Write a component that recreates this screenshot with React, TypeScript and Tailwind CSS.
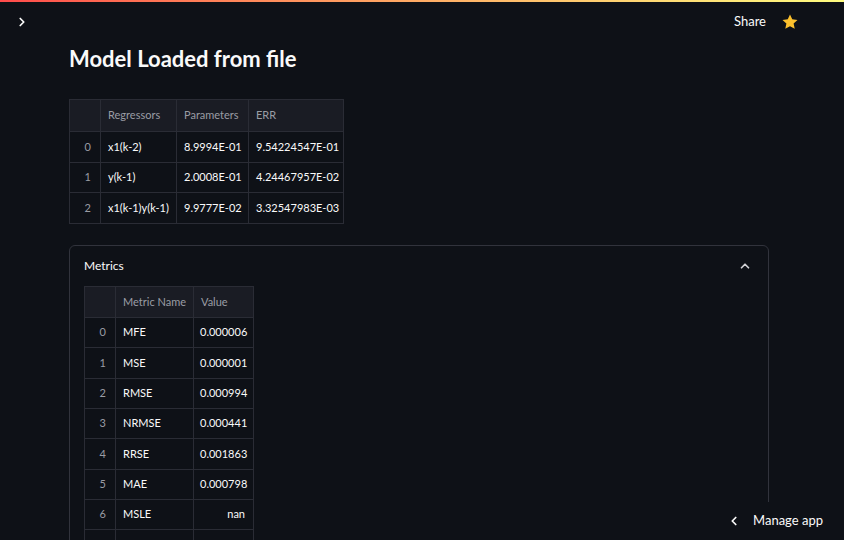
import { ChevronRight, ChevronUp, ChevronLeft } from "lucide-react";

const regressors = [
  { i: 0, name: "x1(k-2)", param: "8.9994E-01", err: "9.54224547E-01" },
  { i: 1, name: "y(k-1)", param: "2.0008E-01", err: "4.24467957E-02" },
  { i: 2, name: "x1(k-1)y(k-1)", param: "9.9777E-02", err: "3.32547983E-03" },
];

const metrics = [
  ["MFE", "0.000006"],
  ["MSE", "0.000001"],
  ["RMSE", "0.000994"],
  ["NRMSE", "0.000441"],
  ["RRSE", "0.001863"],
  ["MAE", "0.000798"],
  ["MSLE", "nan"],
  ["MAPE", "0.000697"],
];

const cell = "border border-[#2a2c35] whitespace-nowrap overflow-hidden";

export default function App() {
  return (
    <div
      className="relative w-full h-[540px] overflow-hidden bg-[#0e1117] text-[#fafafa]"
      style={{ fontFamily: "Lato, 'Liberation Sans', sans-serif" }}
    >
      {/* Decoration bar */}
      <div className="h-[2px] bg-gradient-to-r from-[#ff4b4b] to-[#fffd80]" />

      {/* Header */}
      <div className="flex items-center justify-between h-[40px] pl-[15px] pr-[45px]">
        <ChevronRight size={14} strokeWidth={3} className="text-[#fafafa]" />
        <div className="flex items-center gap-[15px]">
          <span className="text-[13px]">Share</span>
          <svg width="18" height="18" viewBox="0 0 24 24" aria-hidden="true">
            <path
              d="M12 2l3 6.4 7 .8-5.2 4.8 1.5 7L12 17.5 5.7 21l1.5-7L2 9.2l7-.8z"
              fill="#fbc02d"
            />
          </svg>
        </div>
      </div>

      <main className="pl-[69px] pr-[75px]">
        <h1 className="text-[22px] font-bold leading-[36px] -mt-[1px]">Model Loaded from file</h1>

        {/* Regressor table */}
        <table className="mt-[22px] table-fixed w-[274px] border-collapse text-[11px] border border-[#2a2c35]">
          <thead>
            <tr className="h-[32px] bg-[#1a1c24] text-[#9a9ca4]">
              <th className={`w-[31px] ${cell}`} />
              <th className={`w-[76px] px-[7px] text-left font-normal ${cell}`}>Regressors</th>
              <th className={`w-[72px] px-[7px] text-left font-normal ${cell}`}>Parameters</th>
              <th className={`w-[95px] px-[7px] text-left font-normal ${cell}`}>ERR</th>
            </tr>
          </thead>
          <tbody>
            {regressors.map((r) => (
              <tr key={r.i} className="h-[30.67px]">
                <td className={`pr-[9px] text-right text-[#9a9ca4] ${cell}`}>{r.i}</td>
                <td className={`px-[7px] ${cell}`}>{r.name}</td>
                <td className={`px-[7px] ${cell}`}>{r.param}</td>
                <td className={`px-[7px] ${cell}`}>{r.err}</td>
              </tr>
            ))}
          </tbody>
        </table>

        {/* Metrics expander */}
        <div className="mt-[21px] w-[700px] h-[400px] rounded-[6px] border border-[#31333c]">
          <div className="flex items-center justify-between h-[40px] pl-[14px] pr-[16px]">
            <span className="text-[12px]">Metrics</span>
            <ChevronUp size={14} strokeWidth={3} className="text-[#d0d0d4]" />
          </div>
          <table className="ml-[14px] table-fixed w-[169px] border-collapse text-[11px] border border-[#2a2c35]">
            <thead>
              <tr className="h-[31px] bg-[#1a1c24] text-[#9a9ca4]">
                <th className={`w-[31px] ${cell}`} />
                <th className={`w-[78px] px-[7px] text-left font-normal ${cell}`}>Metric Name</th>
                <th className={`w-[60px] px-[7px] text-left font-normal ${cell}`}>Value</th>
              </tr>
            </thead>
            <tbody>
              {metrics.map(([name, value], i) => (
                <tr key={name} className="h-[30.33px]">
                  <td className={`pr-[9px] text-right text-[#9a9ca4] ${cell}`}>{i}</td>
                  <td className={`px-[7px] ${cell}`}>{name}</td>
                  <td className={`pl-[6px] pr-[8px] text-right ${cell}`}>{value}</td>
                </tr>
              ))}
            </tbody>
          </table>
        </div>
      </main>

      {/* Manage app */}
      <div className="absolute right-0 bottom-0 flex items-center gap-[12px] h-[38px] pl-[14px] pr-[21px] bg-[#0e1117]">
        <ChevronLeft size={14} strokeWidth={3} className="text-[#fafafa]" />
        <span className="text-[13px]">Manage app</span>
      </div>
    </div>
  );
}
